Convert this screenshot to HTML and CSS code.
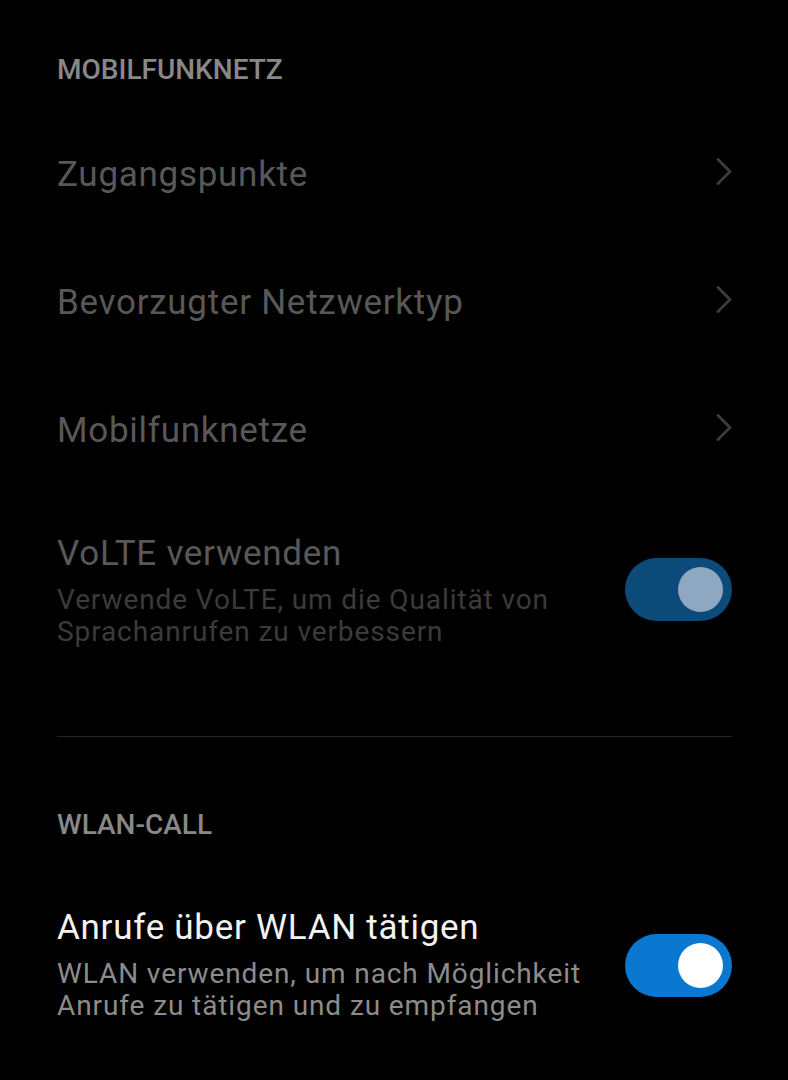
FILE: index.html
```html
<!DOCTYPE html>
<html lang="de">
<head>
<meta charset="utf-8">
<title>Mobilfunknetz</title>
<link rel="stylesheet" href="styles.css">
</head>
<body>
<main class="screen">
  <section class="group">
    <h2 class="group-title first">MOBILFUNKNETZ</h2>
    <div class="nav-row">
      <span class="row-title disabled">Zugangspunkte</span>
      <svg class="chev" width="18" height="30" viewBox="0 0 18 30"><polyline points="3,2.5 15,14.5 3,26.5" fill="none" stroke="#3b3b3b" stroke-width="3" stroke-linecap="round" stroke-linejoin="round"/></svg>
    </div>
    <div class="nav-row">
      <span class="row-title disabled">Bevorzugter Netzwerktyp</span>
      <svg class="chev" width="18" height="30" viewBox="0 0 18 30"><polyline points="3,2.5 15,14.5 3,26.5" fill="none" stroke="#3b3b3b" stroke-width="3" stroke-linecap="round" stroke-linejoin="round"/></svg>
    </div>
    <div class="nav-row">
      <span class="row-title disabled">Mobilfunknetze</span>
      <svg class="chev" width="18" height="30" viewBox="0 0 18 30"><polyline points="3,2.5 15,14.5 3,26.5" fill="none" stroke="#3b3b3b" stroke-width="3" stroke-linecap="round" stroke-linejoin="round"/></svg>
    </div>
    <div class="switch-row volte">
      <div class="texts">
        <div class="row-title disabled">VoLTE verwenden</div>
        <div class="row-sub disabled-sub">Verwende VoLTE, um die Qualität von<br>Sprachanrufen zu verbessern</div>
      </div>
      <div class="toggle dim"><span class="thumb"></span></div>
    </div>
  </section>
  <hr class="divider">
  <section class="group">
    <h2 class="group-title second">WLAN-CALL</h2>
    <div class="switch-row wlan">
      <div class="texts">
        <div class="row-title active">Anrufe über WLAN tätigen</div>
        <div class="row-sub active-sub">WLAN verwenden, um nach Möglichkeit<br>Anrufe zu tätigen und zu empfangen</div>
      </div>
      <div class="toggle on"><span class="thumb"></span></div>
    </div>
  </section>
</main>
</body>
</html>
```
FILE: styles.css
```css
html, body {
  margin: 0;
  padding: 0;
  background: #000;
}
body {
  font-family: Roboto, "Noto Sans", sans-serif;
  width: 788px;
  height: 1080px;
  overflow: hidden;
}
.screen {
  padding: 0 56px 0 57px;
}
.group-title {
  margin: 0;
  font-size: 28px;
  line-height: 32px;
  font-weight: 500;
  color: #888888;
}
.group-title.first {
  padding-top: 54px;
}
.group-title.second {
  padding-top: 72px;
}
.nav-row {
  height: 128px;
  display: flex;
  align-items: center;
  justify-content: space-between;
}
.group-title.first + .nav-row {
  margin-top: 25px;
}
.chev {
  margin-right: -1px;
  margin-bottom: 6px;
}
.row-title {
  font-size: 35px;
  line-height: 40px;
  font-weight: 400;
  letter-spacing: 0.72px;
}
.row-sub {
  font-size: 28px;
  line-height: 32px;
  margin-top: 10px;
  letter-spacing: 0.9px;
}
.disabled { color: #585858; }
.disabled-sub { color: #3b3b3b; }
.active { color: #f2f2f2; }
.active-sub { color: #8c8c8c; }
.switch-row {
  display: flex;
  align-items: center;
  justify-content: space-between;
}
.switch-row.volte {
  padding-top: 39px;
}
.switch-row.wlan {
  padding-top: 67px;
}
.toggle {
  width: 107px;
  height: 63px;
  border-radius: 32px;
  box-sizing: border-box;
  padding: 9px;
  display: flex;
  justify-content: flex-end;
  flex-shrink: 0;
}
.toggle.dim {
  background: #0b4a79;
  margin-bottom: 4px;
}
.toggle.dim .thumb { background: #8ea8c1; }
.toggle.on { background: #0a78d1; }
.toggle.on .thumb { background: #ffffff; }
.thumb {
  width: 45px;
  height: 45px;
  border-radius: 50%;
}
.divider {
  margin: 88px 0 0 0;
  border: 0;
  height: 1px;
  background: #262626;
}
```
